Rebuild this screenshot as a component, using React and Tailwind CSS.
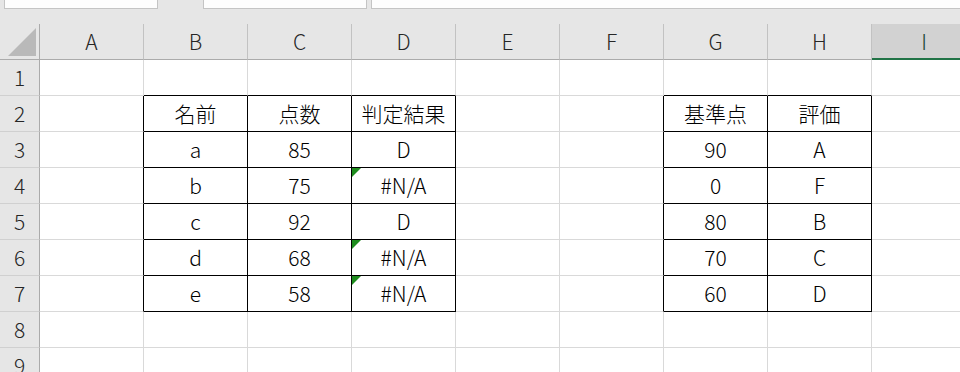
import React from 'react';

const cols = ['A', 'B', 'C', 'D', 'E', 'F', 'G', 'H', 'I'];
const rows = [1, 2, 3, 4, 5, 6, 7, 8, 9];

// cell values keyed by "col,row"
const values = {
  '1,2': '名前', '2,2': '点数', '3,2': '判定結果',
  '1,3': 'a', '2,3': '85', '3,3': 'D',
  '1,4': 'b', '2,4': '75', '3,4': '#N/A',
  '1,5': 'c', '2,5': '92', '3,5': 'D',
  '1,6': 'd', '2,6': '68', '3,6': '#N/A',
  '1,7': 'e', '2,7': '58', '3,7': '#N/A',
  '6,2': '基準点', '7,2': '評価',
  '6,3': '90', '7,3': 'A',
  '6,4': '0', '7,4': 'F',
  '6,5': '80', '7,5': 'B',
  '6,6': '70', '7,6': 'C',
  '6,7': '60', '7,7': 'D',
};

const flagged = ['3,4', '3,6', '3,7'];

const inTable = (c, r) =>
  (r >= 2 && r <= 7) && ((c >= 1 && c <= 3) || (c >= 6 && c <= 7));

const Cell = ({ c, r }) => {
  const key = `${c},${r}`;
  const right = inTable(c, r) || inTable(c + 1, r);
  const bottom = inTable(c, r) || inTable(c, r + 1);
  return (
    <div
      className={`relative flex items-center justify-center h-9 border-r border-b ${right ? 'border-r-black' : 'border-r-[#d9d9d9]'} ${bottom ? 'border-b-black' : 'border-b-[#d9d9d9]'} bg-white text-[21px] text-black`}
    >
      {flagged.includes(key) && (
        <div className="absolute left-0 top-0 w-0 h-0 border-t-[9px] border-t-[#1e8c1e] border-r-[9px] border-r-transparent" />
      )}
      {values[key]}
    </div>
  );
};

export default function App() {
  return (
    <div className="w-[960px] h-[372px] overflow-hidden bg-[#e6e6e6] font-['Noto_Sans_CJK_JP',sans-serif] font-light leading-none">
      {/* name box / formula bar */}
      <div className="h-6 flex items-start">
        <div className="ml-1 w-[154px] h-[9px] bg-[#fdfdfd] border border-t-0 border-[#c4c4c4]" />
        <div className="ml-[45px] w-[164px] h-[9px] bg-[#fdfdfd] border border-t-0 border-[#c4c4c4]" />
        <div className="ml-[4px] flex-1 h-[9px] bg-[#fdfdfd] border-b border-l border-[#c4c4c4]" />
      </div>

      <div className="grid grid-cols-[40px_repeat(9,104px)]">
        {/* corner */}
        <div className="relative h-9 bg-[#e6e6e6] border-r border-b border-r-[#ababab] border-b-[#ababab]">
          <div className="absolute left-2 top-1 w-0 h-0 border-b-[28px] border-b-[#b9b9b9] border-l-[28px] border-l-transparent" />
        </div>
        {cols.map((col, i) =>
          i === 8 ? (
            <div key={col} className="h-9 flex items-center justify-center bg-[#d2d2d2] border-b-2 border-b-[#217346] text-[21px] text-[#1c4a33]">
              {col}
            </div>
          ) : (
            <div key={col} className="h-9 flex items-center justify-center bg-[#e6e6e6] border-r border-b border-r-[#c2c2c2] border-b-[#ababab] text-[21px] text-[#262626]">
              {col}
            </div>
          )
        )}

        {rows.map(r => (
          <React.Fragment key={r}>
            <div className="h-9 flex items-center justify-center bg-[#e6e6e6] border-r border-b border-r-[#ababab] border-b-[#d0d0d0] text-[21px] text-[#262626]">
              {r}
            </div>
            {cols.map((col, c) => (
              <Cell key={col} c={c} r={r} />
            ))}
          </React.Fragment>
        ))}
      </div>
    </div>
  );
}
